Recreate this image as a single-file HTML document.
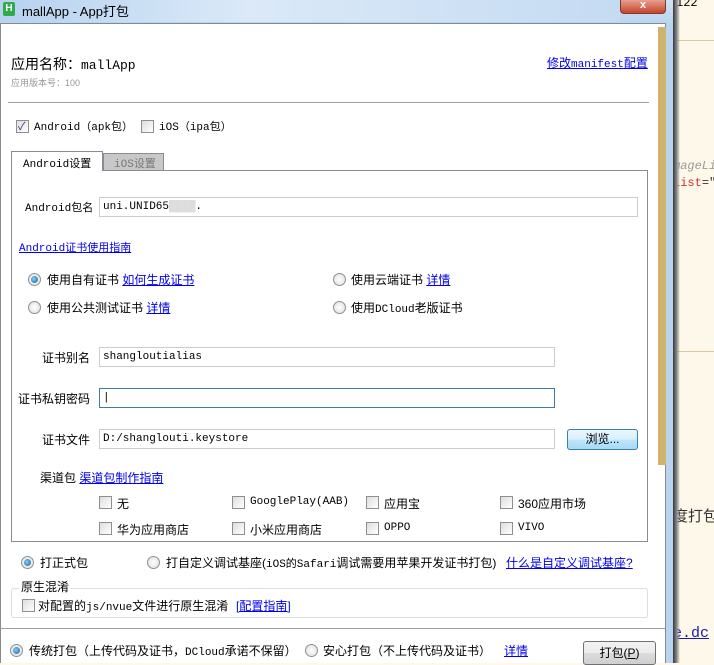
<!DOCTYPE html>
<html><head><meta charset="utf-8"><style>
*{margin:0;padding:0;box-sizing:border-box}
body{width:714px;height:663px;overflow:hidden;position:relative;background:#fdf8ea;font-family:"Liberation Mono","SimSun","Noto Sans CJK SC",monospace;font-size:12px;color:#000}
.a{position:absolute;white-space:nowrap}
.cj{font-family:"Liberation Sans","Noto Sans CJK SC",sans-serif}
.m{font-family:"Liberation Mono",monospace;font-size:11px}
a,.lk{color:#0000ee;text-decoration:underline}
.inp{position:absolute;border:1px solid #c9ccd2;background:#fff;height:20px;padding:4px 3px;font-family:"Liberation Mono",monospace;font-size:11px;line-height:11px}
.cb{position:absolute;width:13px;height:13px;border:1px solid #8f8f8f;background:linear-gradient(135deg,#ddd,#fff)}
.rd{position:absolute;width:13px;height:13px;border-radius:50%;border:1px solid #909090;background:radial-gradient(circle,#fff,#dcdcdc)}
.rd.on::after{content:"";position:absolute;left:2px;top:2px;width:7px;height:7px;border-radius:50%;background:radial-gradient(circle at 40% 40%,#7fd0ff,#1a5c9a)}
.btn{position:absolute;border:1px solid #707070;border-radius:3px;background:linear-gradient(#f2f2f2,#ebebeb 50%,#dcdcdc 51%,#cfcfcf);text-align:center}
</style></head><body>
<div class="a" style="left:673px;top:0;width:41px;height:663px;background:#fdf8ea"></div>
<div class="a" style="left:673px;top:40px;width:41px;height:1px;background:#d8c9a0"></div>
<div class="a" style="left:673px;top:351px;width:41px;height:1px;background:#d8c9a0"></div>
<div class="a" style="left:676px;top:-4px;font-size:12px">122</div>
<div class="a" style="left:673px;top:159px;color:#999;font-style:italic">mageLi</div>
<div class="a" style="left:673px;top:176px;color:#c33">List<span style="color:#333">="</span></div>
<div class="a cj" style="left:673px;top:505px;font-size:15px;color:#333">度打包</div>
<div class="a" style="left:673px;top:625px;color:#1a1aa6;text-decoration:underline;font-size:15px">e.dc</div>
<div class="a" style="left:672px;top:0;width:8px;height:663px;background:linear-gradient(90deg,#222,#8a8a8a 60%,rgba(200,200,200,0))"></div>
<div class="a" style="left:0;top:0;width:673px;height:663px;background:linear-gradient(#cfe3f6,#b9d4ee 25px,#b9d4ee)"></div>
<div class="a" style="left:0;top:0;width:620px;height:22px;background:linear-gradient(90deg,#b6d2ef,#dbe9f8 40%,#c5dbf2)"></div>
<div class="a" style="left:3px;top:2px;width:12px;height:14px;background:#2eab4a;border-radius:2px;color:#fff;font:bold 10px 'Liberation Sans',sans-serif;text-align:center;line-height:14px">H</div>
<div class="a cj" style="left:22px;top:1px;font-size:13px">mallApp - App打包</div>
<div class="a" style="left:620px;top:0;width:46px;height:14px;background:linear-gradient(#e6a090,#c8422a);border:1px solid #7a3a30;border-top:none;border-radius:0 0 4px 4px;color:#fff;text-align:center;font:bold 11px 'Liberation Sans',sans-serif;line-height:10px">x</div>
<div class="a" style="left:0;top:23px;width:666px;height:640px;background:#fff;border-top:1px solid #7f8a99;border-left:1px solid #8a8a8a;border-right:1px solid #8a8a8a"></div>
<div class="a" style="left:658px;top:27px;width:8px;height:438px;background:#cdb36b"></div>
<div class="a cj" style="left:11px;top:54px;font-size:14px">应用名称：<span style="font-family:'Liberation Mono',monospace;font-size:13px">mallApp</span></div>
<div class="a cj" style="left:11px;top:76px;font-size:9px;color:#999">应用版本号：100</div>
<div class="a lk cj" style="left:547px;top:54px;font-size:12px">修改<span class="m">manifest</span>配置</div>
<div class="a" style="left:8px;top:102px;width:641px;height:1px;background:#a0a0a0"></div>
<div class="cb" style="left:16px;top:120px"><span style="position:absolute;left:1px;top:-3px;font-size:11px;color:#2a3f8a">✓</span></div>
<div class="a cj" style="left:34px;top:118px;font-size:11px"><span class="m">Android</span>（<span class="m">apk</span>包）</div>
<div class="cb" style="left:141px;top:120px"></div>
<div class="a cj" style="left:159px;top:118px;font-size:11px"><span class="m">iOS</span>（<span class="m">ipa</span>包）</div>
<div class="a" style="left:11px;top:170px;width:637px;height:372px;border:1px solid #898c95"></div>
<div class="a cj" style="left:11px;top:151px;width:92px;height:20px;background:#fff;border:1px solid #898c95;border-bottom:none;padding:3px 0 0 11px;font-size:11px"><span class="m">Android</span>设置</div>
<div class="a cj" style="left:103px;top:153px;width:61px;height:17px;background:#c8c8c8;border:1px solid #898c95;border-bottom:none;padding:1px 0 0 10px;font-size:11px;color:#777"><span class="m">iOS</span>设置</div>
<div class="a cj" style="left:25px;top:199px;font-size:11px"><span class="m">Android</span>包名</div>
<div class="inp" style="left:99px;top:197px;width:539px">uni.UNID65<span style="color:#ddd">████</span>.</div>
<div class="a lk cj" style="left:19px;top:239px;font-size:11px"><span class="m">Android</span>证书使用指南</div>
<div class="rd on" style="left:28px;top:273px"></div><div class="a cj" style="left:47px;top:271px;font-size:12px">使用自有证书 <span class="lk">如何生成证书</span></div>
<div class="rd" style="left:333px;top:273px"></div><div class="a cj" style="left:351px;top:271px;font-size:12px">使用云端证书 <span class="lk">详情</span></div>
<div class="rd" style="left:28px;top:301px"></div><div class="a cj" style="left:47px;top:299px;font-size:12px">使用公共测试证书 <span class="lk">详情</span></div>
<div class="rd" style="left:333px;top:301px"></div><div class="a cj" style="left:351px;top:299px;font-size:12px">使用<span class="m">DCloud</span>老版证书</div>
<div class="a cj" style="left:42px;top:349px;font-size:12px">证书别名</div>
<div class="inp" style="left:99px;top:347px;width:456px">shangloutialias</div>
<div class="a cj" style="left:18px;top:390px;font-size:12px">证书私钥密码</div>
<div class="inp" style="left:99px;top:388px;width:456px;border-color:#3d7bad">|</div>
<div class="a cj" style="left:42px;top:431px;font-size:12px">证书文件</div>
<div class="inp" style="left:99px;top:429px;width:456px">D:/shanglouti.keystore</div>
<div class="btn cj" style="left:567px;top:429px;width:71px;height:21px;border-color:#3c7fb1;background:linear-gradient(#eaf6fd,#d9f0fc 50%,#bee6fd 51%,#a7d9f5);line-height:19px;font-size:12px">浏览...</div>
<div class="a cj" style="left:40px;top:469px;font-size:12px">渠道包 <span class="lk">渠道包制作指南</span></div>
<div class="cb" style="left:99px;top:496px"></div><div class="a cj" style="left:117px;top:495px">无</div>
<div class="cb" style="left:232px;top:496px"></div><div class="a" style="left:250px;top:496px;font-size:11px">GooglePlay(AAB)</div>
<div class="cb" style="left:366px;top:496px"></div><div class="a cj" style="left:384px;top:495px">应用宝</div>
<div class="cb" style="left:500px;top:496px"></div><div class="a cj" style="left:518px;top:495px">360应用市场</div>
<div class="cb" style="left:99px;top:522px"></div><div class="a cj" style="left:117px;top:521px">华为应用商店</div>
<div class="cb" style="left:232px;top:522px"></div><div class="a cj" style="left:250px;top:521px">小米应用商店</div>
<div class="cb" style="left:366px;top:522px"></div><div class="a" style="left:384px;top:522px;font-size:11px">OPPO</div>
<div class="cb" style="left:500px;top:522px"></div><div class="a" style="left:518px;top:522px;font-size:11px">VIVO</div>
<div class="rd on" style="left:21px;top:556px"></div><div class="a cj" style="left:40px;top:554px">打正式包</div>
<div class="rd" style="left:147px;top:556px"></div>
<div class="a cj" style="left:166px;top:554px">打自定义调试基座(<span class="m">iOS的Safari</span>调试需要用苹果开发证书打包)</div>
<div class="a lk cj" style="left:506px;top:554px">什么是自定义调试基座?</div>
<div class="a" style="left:11px;top:588px;width:637px;height:30px;border:1px solid #d5dfe5;border-radius:3px"></div>
<div class="a cj" style="left:19px;top:578px;background:#fff;padding:0 2px">原生混淆</div>
<div class="cb" style="left:22px;top:599px"></div>
<div class="a cj" style="left:38px;top:597px">对配置的<span class="m">js/nvue</span>文件进行原生混淆</div>
<div class="a lk cj" style="left:236px;top:597px">[配置指南]</div>
<div class="a" style="left:1px;top:628px;width:664px;height:1px;background:#a0a0a0"></div>
<div class="rd on" style="left:10px;top:644px"></div><div class="a cj" style="left:29px;top:642px">传统打包（上传代码及证书，<span class="m">DCloud</span>承诺不保留）</div>
<div class="rd" style="left:305px;top:644px"></div><div class="a cj" style="left:323px;top:642px">安心打包（不上传代码及证书）</div>
<div class="a lk cj" style="left:504px;top:642px">详情</div>
<div class="btn cj" style="left:583px;top:641px;width:73px;height:24px;line-height:22px;font-size:12px">打包(<u>P</u>)</div>
</body></html>
